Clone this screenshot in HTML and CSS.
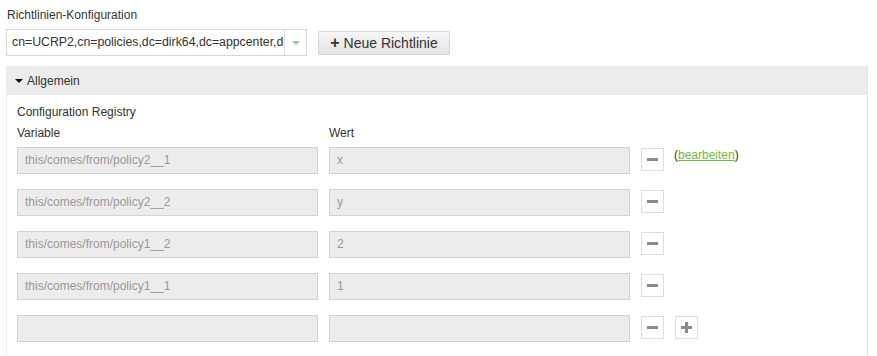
FILE: index.html
```html
<!DOCTYPE html>
<html lang="de">
<head>
<meta charset="UTF-8">
<title>Richtlinien-Konfiguration</title>
<link rel="stylesheet" href="styles.css">
</head>
<body>

<div class="page">
    <div class="label">Richtlinien-Konfiguration</div>
    <div class="toolbar">
        <div class="combo">
            <span class="combo-text">cn=UCRP2,cn=policies,dc=dirk64,dc=appcenter,dc=local</span>
            <span class="combo-arrow"><span class="tri"></span></span>
        </div>
        <button class="btn-new"><span class="plus">+</span> Neue Richtlinie</button>
    </div>

    <div class="section">
        <div class="section-head"><span class="caret"></span>Allgemein</div>
        <div class="section-body">
            <div class="group-title">Configuration Registry</div>
            <div class="grid">
                <div class="col-label">Variable</div>
                <div class="col-label">Wert</div>
                <div></div><div></div><div></div>

                <div class="field">this/comes/from/policy2__1</div>
                <div class="field">x</div>
                <div class="icon-btn"><span class="minus"></span></div>
                <div class="extra">(<a href="#">bearbeiten</a>)</div>
                <div></div>

                <div class="field">this/comes/from/policy2__2</div>
                <div class="field">y</div>
                <div class="icon-btn"><span class="minus"></span></div>
                <div></div><div></div>

                <div class="field">this/comes/from/policy1__2</div>
                <div class="field">2</div>
                <div class="icon-btn"><span class="minus"></span></div>
                <div></div><div></div>

                <div class="field">this/comes/from/policy1__1</div>
                <div class="field">1</div>
                <div class="icon-btn"><span class="minus"></span></div>
                <div></div><div></div>

                <div class="field"></div>
                <div class="field"></div>
                <div class="icon-btn"><span class="minus"></span></div>
                <div class="icon-btn"><span class="minus"></span><span class="minus vert"></span></div>
                <div></div>
            </div>
        </div>
    </div>
</div>

</body>
</html>
```

FILE: styles.css
```css
body {
    margin: 0;
    font-family: "Liberation Sans", Arial, sans-serif;
    font-size: 12px;
    color: #333;
    background: #fff;
}
.page {
    padding: 8px 9px 0 6px;
}
.label {
    padding-left: 1px;
    height: 15px;
    line-height: 15px;
}
.toolbar {
    display: flex;
    align-items: center;
    gap: 11px;
    margin-top: 6px;
}
.combo {
    display: flex;
    width: 299px;
    height: 25px;
    border: 1px solid #d6d6d6;
    overflow: hidden;
}
.combo-text {
    flex: 1;
    padding-left: 5px;
    font-size: 12.3px;
    line-height: 25px;
    white-space: nowrap;
    overflow: hidden;
}
.combo-arrow {
    width: 21px;
    border-left: 1px solid #e0e0e0;
    display: flex;
    align-items: center;
    justify-content: center;
}
.tri {
    width: 0;
    height: 0;
    border-left: 4px solid transparent;
    border-right: 4px solid transparent;
    border-top: 4px solid #8fcf8f;
}
.btn-new {
    height: 24px;
    width: 132px;
    padding: 0;
    border: 1px solid #d6d6d6;
    border-radius: 1px;
    background: linear-gradient(#f6f6f6, #e4e4e4);
    font-family: inherit;
    font-size: 14px;
    color: #333;
}
.plus {
    font-weight: bold;
    font-size: 16px;
}
.section {
    margin-top: 10px;
    border-left: 1px solid #ececec;
    border-right: 1px solid #e4e4e4;
    height: 300px;
}
.section-head {
    background: #ececec;
    height: 29px;
    padding-left: 8px;
    font-size: 12px;
    display: flex;
    align-items: center;
}
.caret {
    width: 0;
    height: 0;
    border-left: 4px solid transparent;
    border-right: 4px solid transparent;
    border-top: 4px solid #111;
    margin-right: 4px;
}
.section-body {
    padding: 10px 0 0 10px;
}
.group-title {
    height: 15px;
    line-height: 15px;
}
.grid {
    display: grid;
    grid-template-columns: 301px 301px 23px max-content 1fr;
    column-gap: 11px;
    row-gap: 15px;
    margin-top: 6px;
    align-items: start;
}
.col-label {
    height: 15px;
    line-height: 15px;
    margin-bottom: -9px;
}
.field {
    box-sizing: border-box;
    height: 27px;
    border: 1px solid #d2d2d2;
    background: #ececec;
    color: #999;
    padding-left: 7px;
    line-height: 25px;
}
.icon-btn {
    box-sizing: border-box;
    width: 23px;
    height: 23px;
    margin-top: 1px;
    border: 1px solid #dedede;
    background: #fff;
    position: relative;
}
.minus {
    position: absolute;
    left: 5px;
    top: 9px;
    width: 11px;
    height: 3px;
    background: #8a8a8a;
}
.minus.vert {
    left: 9px;
    top: 5px;
    width: 3px;
    height: 11px;
}
.extra {
    margin-left: -1px;
    margin-top: 1px;
    font-size: 12px;
    color: #333;
}
.extra a {
    color: #6fb83c;
    text-decoration: underline;
}
```
